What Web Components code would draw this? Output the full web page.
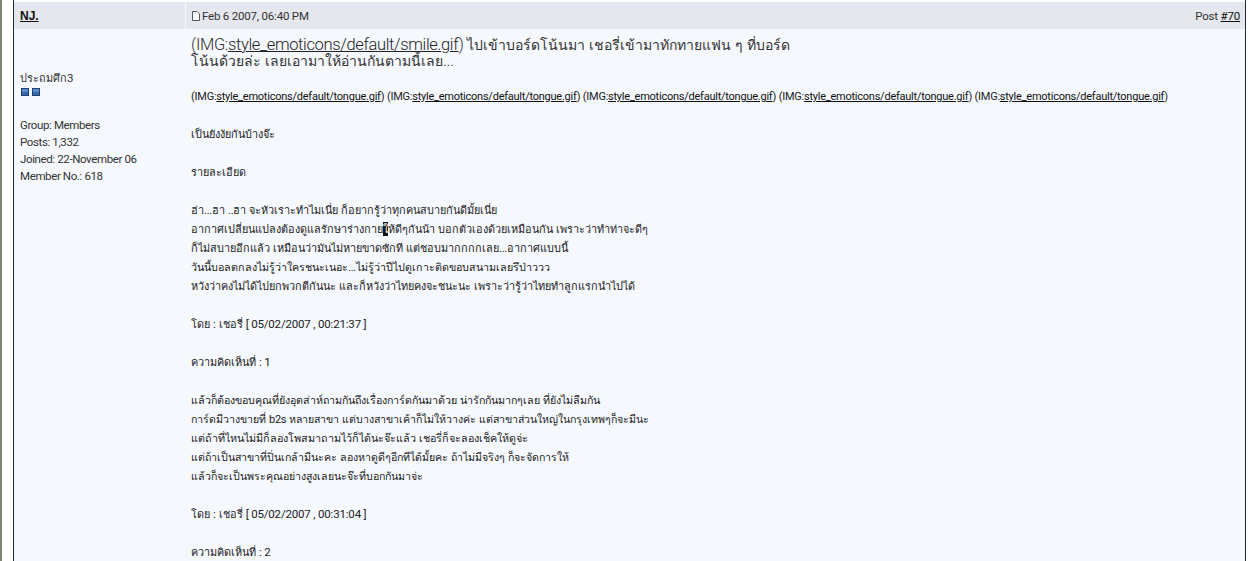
<!DOCTYPE html>
<html lang="th"><head><meta charset="utf-8">
<style>
html,body{margin:0;padding:0;height:561px;overflow:hidden;background:#fff;}
body{font:11px "Liberation Sans","Noto Sans",sans-serif;color:#222;}
a{color:#111}
</style></head><body>
<forum-page>
<forum-post>
<a slot="author" href="#">NJ.</a>
<span slot="date">Feb 6 2007, 06:40 PM</span>
<span slot="num">Post <a href="#">#70</a></span>
<member-info slot="side" rank="ประถมศึก" rn="3" pips="2" group="Members" posts="1,332" joined="22-November 06" no="618"></member-info>
<post-body slot="body"></post-body>
</forum-post>
</forum-page>
<script>
const NARROW='Roboto,"Liberation Sans",sans-serif';
customElements.define('forum-page',class extends HTMLElement{constructor(){super();this.attachShadow({mode:'open'}).innerHTML=`<style>
:host{display:block;height:561px;overflow:hidden;background:#fff;padding-left:3px}
.edge{position:absolute;left:0;top:0;bottom:0;width:2px;background:#80806f}
.wrap{margin:0 6px 0 10px;}
</style><div class="edge"></div><div class="wrap"><slot></slot></div>`}});
customElements.define('forum-post',class extends HTMLElement{constructor(){super();this.attachShadow({mode:'open'}).innerHTML=`<style>
:host{display:grid;grid-template-columns:171px 1fr;grid-template-rows:27px 1fr;column-gap:1px;height:561px;box-sizing:border-box;padding-top:2px;border-left:1px solid #1c2b3a;border-right:1px solid #1c2b3a;background:linear-gradient(#fff 2px,#f5f8fd 2px)}
.h{background:#e4e7ed;display:flex;align-items:center;font-size:11.5px;letter-spacing:-.2px;font-family:${NARROW};color:#333}
.a{padding-left:6px;letter-spacing:0}
.d{justify-content:space-between;padding:0 5px 0 6px}
.d svg{margin-right:2px;flex:none}
.l{display:flex;align-items:center}
::slotted(a){color:#111;font-weight:bold;font-family:"Liberation Sans",sans-serif;font-size:12px}
.side{padding:41px 0 0 6px;background:#f5f8fd}
.main{background:#f5f8fd;padding:8px 0 0 5px;min-width:0}
</style>
<div class="h a"><slot name="author"></slot></div>
<div class="h d"><span class="l"><svg width="8" height="10" viewBox="0 0 8 10"><path d="M.5.5h4.500l2.500 2.500v6.500h-7z" fill="#fff" stroke="#556"/></svg><slot name="date"></slot></span><slot name="num"></slot></div>
<div class="side"><slot name="side"></slot></div>
<div class="main"><slot name="body"></slot></div>`}});
customElements.define('member-info',class extends HTMLElement{constructor(){super();const g=k=>this.getAttribute(k);const r=this.attachShadow({mode:'open'});
const pip=`<i></i>`.repeat(+g('pips'));
r.innerHTML=`<style>:host{display:block;font-size:11.5px;letter-spacing:-.38px;line-height:17px;color:#333;font-family:${NARROW}}
.r{height:17px}.t{font:10.8px "Liberation Sans","Noto Sans",sans-serif;letter-spacing:0}
.p{display:flex;gap:3px;height:9px;margin:1px 0 20px 1px;align-items:flex-start}
i{display:block;width:8px;height:8px;background:linear-gradient(#5a8bcd 50%,#3566ad 50%);border:1px solid #20406f;box-sizing:border-box}
</style><div class="r"><span class="t">${g('rank')}</span>${g('rn')}</div><div class="p">${pip}</div>
<div>Group: ${g('group')}</div><div>Posts: ${g('posts')}</div><div>Joined: ${g('joined')}</div><div>Member No.: ${g('no')}</div>`}});
const wrap=h=>h.split(/(<[^>]+>)/).map(p=>p[0]==='<'?p:p.replace(/[!-~](?:[ -~]*[!-~])?/g,m=>`<span class="n">${m}</span>`)).join('');
const tg='(IMG:<a href="#">style_emoticons/default/tongue.gif</a>)';
const big=`<div class="big">${wrap('(IMG:<a href="#">style_emoticons/default/smile.gif</a>) ไปเข้าบอร์ดโน้นมา เชอรี่เข้ามาทักทายแฟน ๆ ที่บอร์ด<br>โน้นด้วยล่ะ เลยเอามาให้อ่านกันตามนี้เลย...')}</div>`;
const lines=[
[big],[''],[wrap([tg,tg,tg,tg,tg].join(' '))],[''],[wrap('เป็นยังงัยกันบ้างจ๊ะ')],[''],[wrap('รายละเอียด')],[''],
[wrap('ฮ่า...ฮา ..ฮา จะหัวเราะทำไมเนี่ย ก็อยากรู้ว่าทุกคนสบายกันดีมั้ยเนี่ย')],
[wrap('อากาศเปลี่ยนแปลงต้องดูแลรักษาร่างกาย<mark>ใ</mark>ห้ดีๆกันน้า บอกตัวเองด้วยเหมือนกัน เพราะว่าทำท่าจะดีๆ')],
[wrap('ก็ไม่สบายอีกแล้ว เหมือนว่ามันไม่หายขาดซักที แต่ชอบมากกกกเลย...อากาศแบบนี้')],
[wrap('วันนี้บอลตกลงไม่รู้ว่าใครชนะเนอะ...ไม่รู้ว่าปีไปดูเกาะติดขอบสนามเลยรึป่าววว'),10.75],
[wrap('หวังว่าคงไม่ได้ไปยกพวกตีกันนะ และก็หวังว่าไทยคงจะชนะนะ เพราะว่ารู้ว่าไทยทำลูกแรกนำไปได้')],[''],
[wrap('โดย : เชอรี่ [ 05/02/2007 , 00:21:37 ]'),0,'date'],[''],[wrap('ความคิดเห็นที่ : 1'),0,'date'],[''],
[wrap('แล้วก็ต้องขอบคุณที่ยังอุตส่าห์ถามกันถึงเรื่องการ์ดกันมาด้วย น่ารักกันมากๆเลย ที่ยังไม่ลืมกัน'),10.72],
[wrap('การ์ดมีวางขายที่ b2s หลายสาขา แต่บางสาขาเค้าก็ไม่ให้วางค่ะ แต่สาขาส่วนใหญ่ในกรุงเทพๆก็จะมีนะ'),10.6],
[wrap('แต่ถ้าที่ไหนไม่มีก็ลองโพสมาถามไว้ก็ได้นะจ๊ะแล้ว เชอรี่ก็จะลองเช็คให้ดูจ่ะ'),10.77],
[wrap('แต่ถ้าเป็นสาขาที่ปิ่นเกล้ามีนะคะ ลองหาดูดีๆอีกทีได้มั้ยคะ ถ้าไม่มีจริงๆ ก็จะจัดการให้'),10.63],
[wrap('แล้วก็จะเป็นพระคุณอย่างสูงเลยนะจ๊ะที่บอกกันมาจ่ะ'),10.62],[''],
[wrap('โดย : เชอรี่ [ 05/02/2007 , 00:31:04 ]'),0,'date'],[''],[wrap('ความคิดเห็นที่ : 2'),0,'date']];
customElements.define('post-body',class extends HTMLElement{constructor(){super();this.attachShadow({mode:'open'}).innerHTML=`<style>
a{color:#111;text-decoration:underline}
:host{display:block;font-size:10.85px;line-height:19px;color:#222;white-space:nowrap}
.n{font-family:${NARROW};font-size:11px;letter-spacing:-.24px;line-height:0}
.date .n{font-size:11.5px;letter-spacing:-.18px}
.big{font-size:14px;line-height:16px;margin-bottom:-1px;color:#333}
.big .n{font-size:16.5px;font-weight:300;letter-spacing:-.35px}
.big a{color:#222}
mark{background:#111;color:#fff;padding:1px 0}
.e{height:19px}
</style>`+lines.map(([l,s,c])=>l===''?'<div class="e"></div>':`<div${c?` class="${c}"`:''}${s?` style="font-size:${s}px"`:''}>${l}</div>`).join('')}});
</script>
</body></html>
